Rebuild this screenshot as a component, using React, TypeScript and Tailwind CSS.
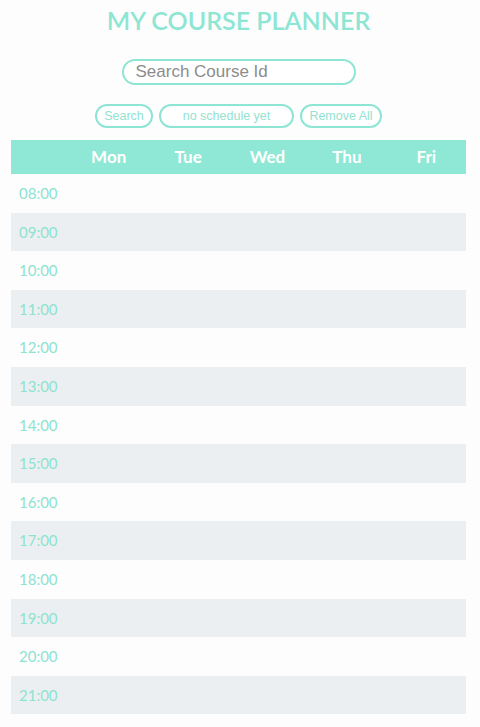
const days = ["Mon", "Tue", "Wed", "Thu", "Fri"];
const hours = [
  "08:00", "09:00", "10:00", "11:00", "12:00", "13:00", "14:00",
  "15:00", "16:00", "17:00", "18:00", "19:00", "20:00", "21:00",
];

export default function App() {
  return (
    <div className="min-h-[727px] bg-[#fdfdfe] font-['Lato',sans-serif]">
      <div className="w-[477px]">
        {/* Title */}
        <h1 className="pt-[5px] text-center text-[25px] font-semibold leading-[30px] text-[#8de6d3]">
          MY COURSE PLANNER
        </h1>

        {/* Search */}
        <div className="mt-[24px] flex justify-center">
          <input
            placeholder="Search Course Id"
            className="h-[26px] w-[234px] rounded-full border-2 border-[#8ee5d3] bg-white px-[12px] font-['Liberation_Sans',sans-serif] text-[17px] text-gray-500 outline-none placeholder:text-[#8c8c8c]"
          />
        </div>

        {/* Actions */}
        <div className="mt-[19px] flex justify-center gap-[6px] font-['Liberation_Sans',sans-serif] text-[12.5px] text-[#93e2d0]">
          <button className="h-[24px] w-[58px] rounded-full border-2 border-[#8ee5d3] bg-white">
            Search
          </button>
          <button className="h-[24px] w-[135px] rounded-full border-2 border-[#8ee5d3] bg-white">
            no schedule yet
          </button>
          <button className="h-[24px] w-[82px] rounded-full border-2 border-[#8ee5d3] bg-white">
            Remove All
          </button>
        </div>
      </div>

      {/* Timetable */}
      <div className="ml-[11px] mt-[12px] w-[455px]">
        <div className="grid h-[34px] grid-cols-[58px_repeat(5,1fr)] items-center bg-[#8ee8d5] text-[17px] font-bold text-white">
          <div />
          {days.map((d) => (
            <div key={d} className="text-center">
              {d}
            </div>
          ))}
        </div>
        {hours.map((h, i) => (
          <div
            key={h}
            className={`grid h-[38.6px] grid-cols-[58px_repeat(5,1fr)] items-center ${
              i % 2 === 1 ? "bg-[#eceff1]" : "bg-[#fdfdfe]"
            }`}
          >
            <div className="pl-[8px] text-[15px] font-normal text-[#8de3cf]">{h}</div>
            {days.map((d) => (
              <div key={d} />
            ))}
          </div>
        ))}
      </div>
    </div>
  );
}
